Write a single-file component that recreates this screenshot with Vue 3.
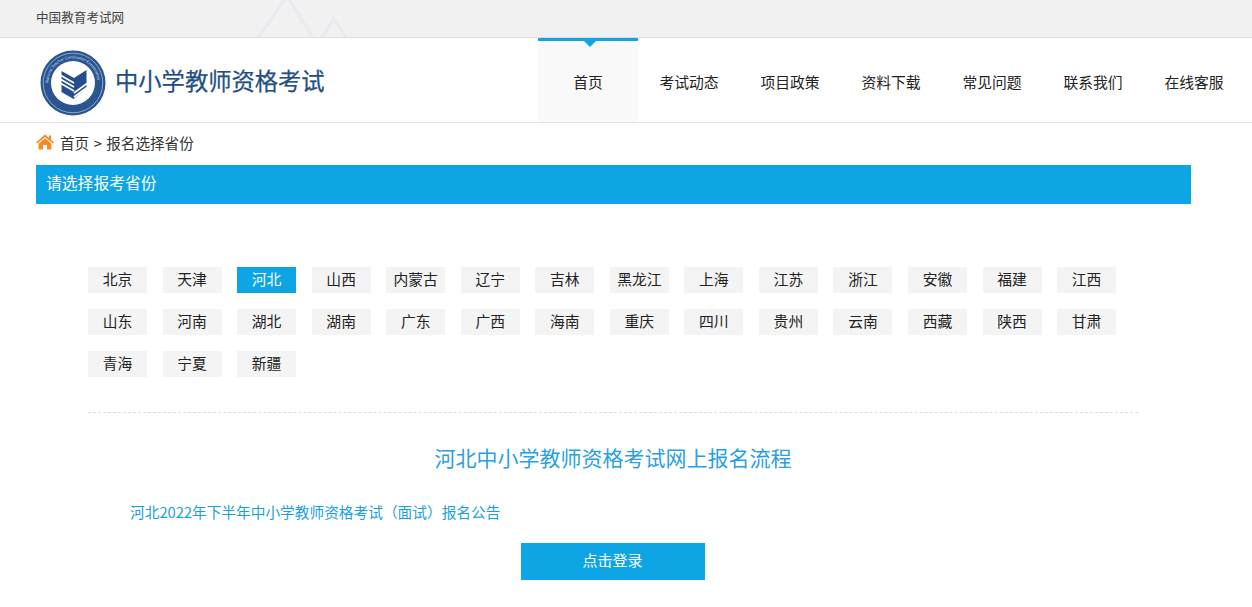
<script setup>
const navItems = ['首页', '考试动态', '项目政策', '资料下载', '常见问题', '联系我们', '在线客服']
const provinces = ['北京','天津','河北','山西','内蒙古','辽宁','吉林','黑龙江','上海','江苏','浙江','安徽','福建','江西','山东','河南','湖北','湖南','广东','广西','海南','重庆','四川','贵州','云南','西藏','陕西','甘肃','青海','宁夏','新疆']
</script>

<template>
  <div class="page">
    <div class="topbar">
      <svg class="mountains" width="120" height="37" viewBox="0 0 120 37" aria-hidden="true">
        <path d="M7 38 L36 -4 L62 38 M71 38 L83 19 L95 38" fill="none" stroke="#e8ebf1" stroke-width="3" />
      </svg>
      <span class="topbar-text">中国教育考试网</span>
    </div>

    <header class="header">
      <div class="brand">
        <svg class="seal" width="66" height="66" viewBox="0 0 66 66" aria-hidden="true">
          <defs>
            <path id="ring" d="M33 33 m-24.6 0 a24.6 24.6 0 1 1 49.2 0 a24.6 24.6 0 1 1 -49.2 0" />
          </defs>
          <circle cx="33" cy="33" r="32.5" fill="#2a5590" />
          <circle cx="33" cy="33" r="29.8" fill="none" stroke="#b9c9de" stroke-width="0.7" />
          <text class="seal-text"><textPath href="#ring">National Teacher Certification Examination</textPath></text>
          <circle cx="33" cy="33" r="22" fill="#fff" />
          <path d="M21.5 21 L34 28 L46.5 20 L46.5 38 L33.5 49 L21.5 42 Z" fill="#234f8c" />
          <path d="M21 25.5 L34 33 M21 29.5 L34 37 M21 33.5 L34 41 M34 47 L47 37.5 M34 43 L47 33.5" stroke="#fff" stroke-width="1.6" fill="none" />
        </svg>
        <span class="brand-name">中小学教师资格考试</span>
      </div>
      <nav class="nav">
        <a v-for="(item, i) in navItems" :key="item" class="nav-item" :class="{ active: i === 0 }">{{ item }}</a>
      </nav>
    </header>

    <div class="breadcrumb">
      <svg class="home" width="18" height="16" viewBox="0 0 18 16" aria-hidden="true">
        <path d="M9 0.5 L13 4 V1.5 H15 V5.8 L18 8.5 L16.8 9.6 L9 2.9 L1.2 9.6 L0 8.5 Z" fill="#f7891e" />
        <path d="M9 4.3 L15.4 9.7 V15.5 H11 V11 H7 V15.5 H2.6 V9.7 Z" fill="#f7891e" />
      </svg>
      <span class="crumb-text">首页 &gt; 报名选择省份</span>
    </div>

    <h2 class="section-title">请选择报考省份</h2>

    <main class="content">
      <ul class="provinces">
        <li v-for="name in provinces" :key="name" class="province" :class="{ selected: name === '河北' }">{{ name }}</li>
      </ul>
      <div class="divider"></div>
      <h1 class="flow-title">河北中小学教师资格考试网上报名流程</h1>
      <a class="notice">河北2022年下半年中小学教师资格考试（面试）报名公告</a>
      <div class="actions">
        <button class="login" type="button">点击登录</button>
      </div>
    </main>
  </div>
</template>

<style>
html, body { margin: 0; background: #fff; overflow: hidden; }
</style>

<style scoped>
.page {
  font-family: "Noto Sans CJK SC", "Liberation Sans", sans-serif;
  color: #333;
}
.topbar {
  position: relative;
  height: 37px;
  background: #f1f1f1;
  border-bottom: 1px solid #ddd;
  padding-left: 36px;
  overflow: hidden;
}
.mountains { position: absolute; left: 251px; top: 0; }
.topbar-text {
  position: relative;
  font-size: 12.6px;
  line-height: 34px;
  color: #444;
}
.header {
  display: flex;
  justify-content: space-between;
  height: 84px;
  border-bottom: 1px solid #e2e2e2;
  padding: 0 8px 0 40px;
}
.brand { display: flex; align-items: center; gap: 9px; }
.seal { margin-top: 6px; }
.seal-text { font-size: 3.9px; fill: #d5deeb; font-family: "Liberation Sans", sans-serif; }
.brand-name {
  font-size: 23.3px;
  font-weight: 400;
  color: #1f4f86;
  -webkit-text-stroke: 0.25px #1f4f86;
}
.nav { display: flex; gap: 1px; }
.nav-item {
  position: relative;
  width: 100px;
  text-align: center;
  font-size: 14.8px;
  line-height: 87px;
  color: #222;
}
.nav-item.active {
  background: #f9f9f9;
  border-top: 3px solid #0ea5e4;
  line-height: 81px;
  height: 81px;
}
.nav-item.active::after {
  content: "";
  position: absolute;
  left: 46px;
  top: 0;
  border: 6px solid transparent;
  border-top-color: #0ea5e4;
  border-bottom-width: 0;
}
.breadcrumb {
  display: flex;
  align-items: center;
  gap: 6px;
  height: 42px;
  padding-left: 36px;
  font-size: 14.6px;
  color: #333;
}
.crumb-text { margin-top: -3px; word-spacing: 1.2px; }
.home { margin-top: -4px; }
.section-title {
  margin: 0 0 0 36px;
  width: 1145px;
  height: 39px;
  padding-left: 10px;
  background: #0ea5e4;
  color: #fff;
  font-size: 15.8px;
  font-weight: 400;
  line-height: 36px;
}
.content { padding: 63px 114px 0 88px; }
.provinces {
  display: flex;
  flex-wrap: wrap;
  gap: 16px 15.55px;
  margin: 0;
  padding: 0;
  list-style: none;
  height: 110px;
}
.province {
  width: 59px;
  height: 26px;
  background: #f4f4f4;
  text-align: center;
  font-size: 14.8px;
  line-height: 24px;
  color: #222;
}
.province.selected { background: #0ea5e4; color: #fff; }
.divider { margin-top: 35px; border-top: 1px dashed #ddd; }
.flow-title {
  margin: 28px 0 0;
  font-size: 21px;
  font-weight: 400;
  line-height: 32px;
  color: #2a9fe2;
  text-align: center;
  width: 1050px;
}
.notice {
  display: block;
  margin: 27px 0 0 42px;
  font-size: 14.7px;
  line-height: 24px;
  color: #189fe3;
}
.actions { margin-top: 19px; width: 1050px; display: flex; justify-content: center; }
.login {
  width: 184px;
  height: 37px;
  border: 0;
  padding: 0 0 5px;
  background: #0ea5e4;
  color: #fff;
  font: inherit;
  font-size: 15px;
  margin-left: -1px;
}
</style>
